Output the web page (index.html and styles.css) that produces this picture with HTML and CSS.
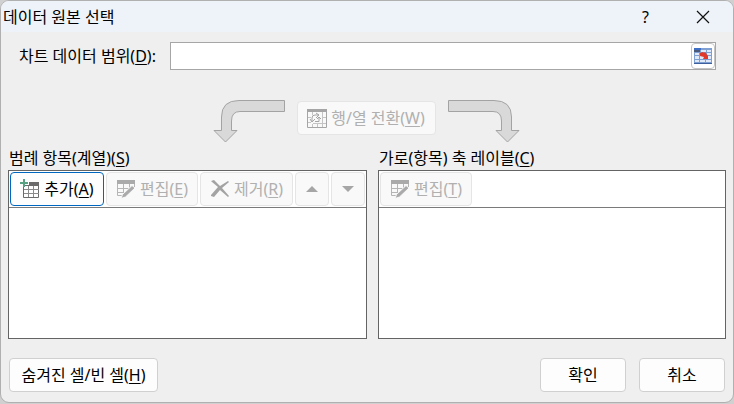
FILE: index.html
```html
<!DOCTYPE html>
<html lang="ko">
<head>
    <meta charset="UTF-8">
    <meta name="viewport" content="width=device-width, initial-scale=1.0">
    <title>데이터 원본 선택</title>
    <link rel="stylesheet" href="styles.css">
</head>
<body>
    <!-- Icons used more than once -->
    <svg width="0" height="0" class="sprite">
        <symbol id="icon-edit" viewBox="0 0 20 20">
            <path d="M1 1h18v4H1z" fill="#aaa"/>
            <path d="M1.500 5v11.500H8M1 9.500h13M1 13.500h9M7.500 5v11M13.500 5v5M18.500 5v3" fill="none" stroke="#b5b5b5"/>
            <path d="M5 19.500l1.500-4L16 6.500l3 2.500-9.500 9z" fill="#aaa" stroke="#f9f9f9"/>
        </symbol>
        <symbol id="icon-arrow" viewBox="0 0 74 44">
            <path d="M72.500 1.500H27Q9.500 1.500 9.500 18v13.500H2L13.500 43 25 31.500h-5.500V22Q19.500 12.500 28 12.500h44.500z" fill="#d9d9d9" stroke="#a3a3a3"/>
        </symbol>
    </svg>

    <form class="dialog">
        <header class="titlebar">
            <h1>데이터 원본 선택</h1>
            <button type="button" class="title-btn" aria-label="도움말">?</button>
            <button type="button" class="title-btn" aria-label="닫기">
                <svg width="14" height="14" viewBox="0 0 14 14"><path d="M1 1l12 12M13 1L1 13" stroke="#111" stroke-width="1.200"/></svg>
            </button>
        </header>

        <main class="content">
            <div class="range-row">
                <label for="range">차트 데이터 범위(<u>D</u>):</label>
                <div class="range-box">
                    <input type="text" id="range">
                    <button type="button" class="picker" aria-label="범위 선택">
                        <svg width="18" height="16" viewBox="0 0 18 16">
                            <path d="M0 0h18v16H0z" fill="#7e9fd2"/>
                            <path d="M0 0h7v2H0z" fill="#3f6fc4"/>
                            <path d="M0 2h6v2H0z" fill="#4a5a78"/>
                            <path d="M0 15h18v1H0z" fill="#3c5f9e"/>
                            <path d="M1 5h4v2H1zM1 8h4v3H1zM1 12h4v2H1zM6 12h5v2H6zM12 12h5v2h-5zM12 8h5v3h-5zM6 8h5v3H6zM13 5h4v2h-4zM7 2h5v2H7zM13 2h4v2h-4z" fill="#dfe9f8"/>
                            <path d="M6 5l3-1 1 1 1-1 3 4v3H9l1-2-4-1z" fill="#e0392b"/>
                        </svg>
                    </button>
                </div>
            </div>

            <div class="switch-row">
                <svg class="arrow" width="74" height="44"><use href="#icon-arrow"/></svg>
                <button type="button" class="btn switch" disabled>
                    <svg width="20" height="19" viewBox="0 0 20 19">
                        <path d="M0 0h20v3H0z" fill="#a5a5a5"/>
                        <path d="M.5 3v15.500h19V3" fill="none" stroke="#a5a5a5"/>
                        <path d="M1 8.500h3M1 13.500h3M16 8.500h3M6 14.500h13M5.500 3v3M10.500 15v3M15.500 3v15M5.500 15v3" stroke="#c4c4c4"/>
                        <path d="M5 13V9q0-3 3-3h4M9 4l3 2-3 3M3 10l2 3 3-3M8 12.500h4v-4M10 10l2-2 2 2" fill="none" stroke="#a5a5a5"/>
                    </svg>
                    <span>행/열 전환(<u>W</u>)</span>
                </button>
                <svg class="arrow flipped" width="74" height="44"><use href="#icon-arrow"/></svg>
            </div>

            <div class="lists">
                <section>
                    <h2>범례 항목(계열)(<u>S</u>)</h2>
                    <div class="list">
                        <div class="toolbar">
                            <button type="button" class="btn add">
                                <svg width="20" height="20" viewBox="0 0 20 20">
                                    <path d="M3.500 8v10.500h15V4" fill="#fff" stroke="#6b6b6b"/>
                                    <path d="M9 3h10v4H3.500V6H9z" fill="#6b6b6b"/>
                                    <path d="M4 10.500h15M4 14.500h15M8.500 7v11M13.500 7v11" stroke="#8a8a8a"/>
                                    <path d="M4 0v8M0 4h8" stroke="#58a183" stroke-width="2"/>
                                </svg>
                                <span>추가(<u>A</u>)</span>
                            </button>
                            <button type="button" class="btn edit" disabled>
                                <svg width="20" height="20"><use href="#icon-edit"/></svg>
                                <span>편집(<u>E</u>)</span>
                            </button>
                            <button type="button" class="btn remove" disabled>
                                <svg width="20" height="20" viewBox="0 0 20 20"><path d="M1 2l3-1 6 6 8-5 1 1-7 6 7 8-1 1-8-7-6 7-3-1v-1l7-8-6-5z" fill="#a3a3a3"/></svg>
                                <span>제거(<u>R</u>)</span>
                            </button>
                            <button type="button" class="btn move" aria-label="위로" disabled>
                                <svg width="12" height="6" viewBox="0 0 12 6"><path d="M6 0l6 6H0z" fill="#a6a6a6"/></svg>
                            </button>
                            <button type="button" class="btn move" aria-label="아래로" disabled>
                                <svg width="12" height="6" viewBox="0 0 12 6"><path d="M6 6l6-6H0z" fill="#a6a6a6"/></svg>
                            </button>
                        </div>
                        <div class="items"></div>
                    </div>
                </section>
                <section>
                    <h2>가로(항목) 축 레이블(<u>C</u>)</h2>
                    <div class="list">
                        <div class="toolbar">
                            <button type="button" class="btn edit" disabled>
                                <svg width="20" height="20"><use href="#icon-edit"/></svg>
                                <span>편집(<u>T</u>)</span>
                            </button>
                        </div>
                        <div class="items"></div>
                    </div>
                </section>
            </div>

            <footer class="footer">
                <button type="button" class="btn hidden-cells"><span>숨겨진 셀/빈 셀(<u>H</u>)</span></button>
                <button type="submit" class="btn action">확인</button>
                <button type="button" class="btn action">취소</button>
            </footer>
        </main>
    </form>
</body>
</html>
```
FILE: styles.css
```css
* {
    box-sizing: border-box;
}
body {
    margin: 0;
    background: #d0d0d0;
    color: #000;
    font: 16px/20px "Noto Sans", "Noto Sans CJK KR", sans-serif;
}
h1, h2 {
    margin: 0;
    font: inherit;
}
button, input {
    font: inherit;
    color: inherit;
}
svg {
    display: block;
    flex: none;
}
u {
    text-underline-offset: 2px;
    text-decoration-thickness: 1px;
}
.sprite {
    position: absolute;
}
.dialog {
    background: #efefef;
    border: 1px solid #b0b0b0;
    border-radius: 9px;
    overflow: hidden;
}

/* Title bar */
.titlebar {
    display: flex;
    align-items: center;
    height: 31px;
    padding: 0 2px;
    background: #eef3f9;
}
.titlebar h1 {
    flex: 1;
}
.title-btn {
    display: flex;
    align-items: center;
    justify-content: center;
    width: 57px;
    height: 31px;
    padding: 0;
    border: none;
    background: none;
}

.content {
    padding: 10px 7px;
}

/* Data range */
.range-row {
    display: flex;
    align-items: center;
    gap: 11px;
    padding: 0 10px 0 11px;
}
.range-row label {
    min-width: 140px;
    white-space: nowrap;
}
.range-box {
    display: flex;
    flex: 1;
    height: 28px;
    background: #fff;
    border: 1px solid #a6a6a6;
}
.range-box input {
    flex: 1;
    min-width: 0;
    padding: 0 4px;
    border: none;
    outline: none;
    background: none;
}
.picker {
    display: flex;
    align-items: center;
    justify-content: center;
    width: 24px;
    padding: 0;
    background: #fff;
    border: 1px solid #c4c4c4;
    border-radius: 4px;
}

/* Switch row / column */
.switch-row {
    display: flex;
    justify-content: center;
    gap: 11px;
    margin-top: 29px;
    padding-right: 2px;
}
.flipped {
    transform: scaleX(-1);
}

.btn {
    display: flex;
    align-items: center;
    justify-content: center;
    gap: 4px;
    height: 34px;
    padding: 0;
    white-space: nowrap;
    background: #fdfdfd;
    border: 1px solid #d0d0d0;
    border-radius: 4px;
}
.btn:disabled {
    color: #b0b0b0;
    background: #f9f9f9;
    border-color: #e5e5e5;
}
.switch {
    width: 139px;
    margin-top: 2px;
}

/* Lists */
.lists {
    display: grid;
    grid-template-columns: 359fr 348fr;
    gap: 11px;
    margin-top: 5px;
}
.lists h2 {
    padding-left: 1px;
}
.list {
    margin-top: 2px;
    background: #fff;
    border: 1px solid #646464;
}
.toolbar {
    display: flex;
    gap: 2px;
    padding: 1px;
    border-bottom: 1px solid #7a7a7a;
}
.items {
    height: 130px;
}
.add {
    width: 94px;
    border-color: #0067c0;
}
.edit {
    width: 92px;
}
.remove {
    width: 93px;
}
.move {
    width: 34px;
}

/* Bottom buttons */
.footer {
    display: flex;
    gap: 13px;
    margin-top: 19px;
    padding: 0 1px;
}
.hidden-cells {
    width: 149px;
    margin-right: auto;
}
.action {
    width: 86px;
}
```
